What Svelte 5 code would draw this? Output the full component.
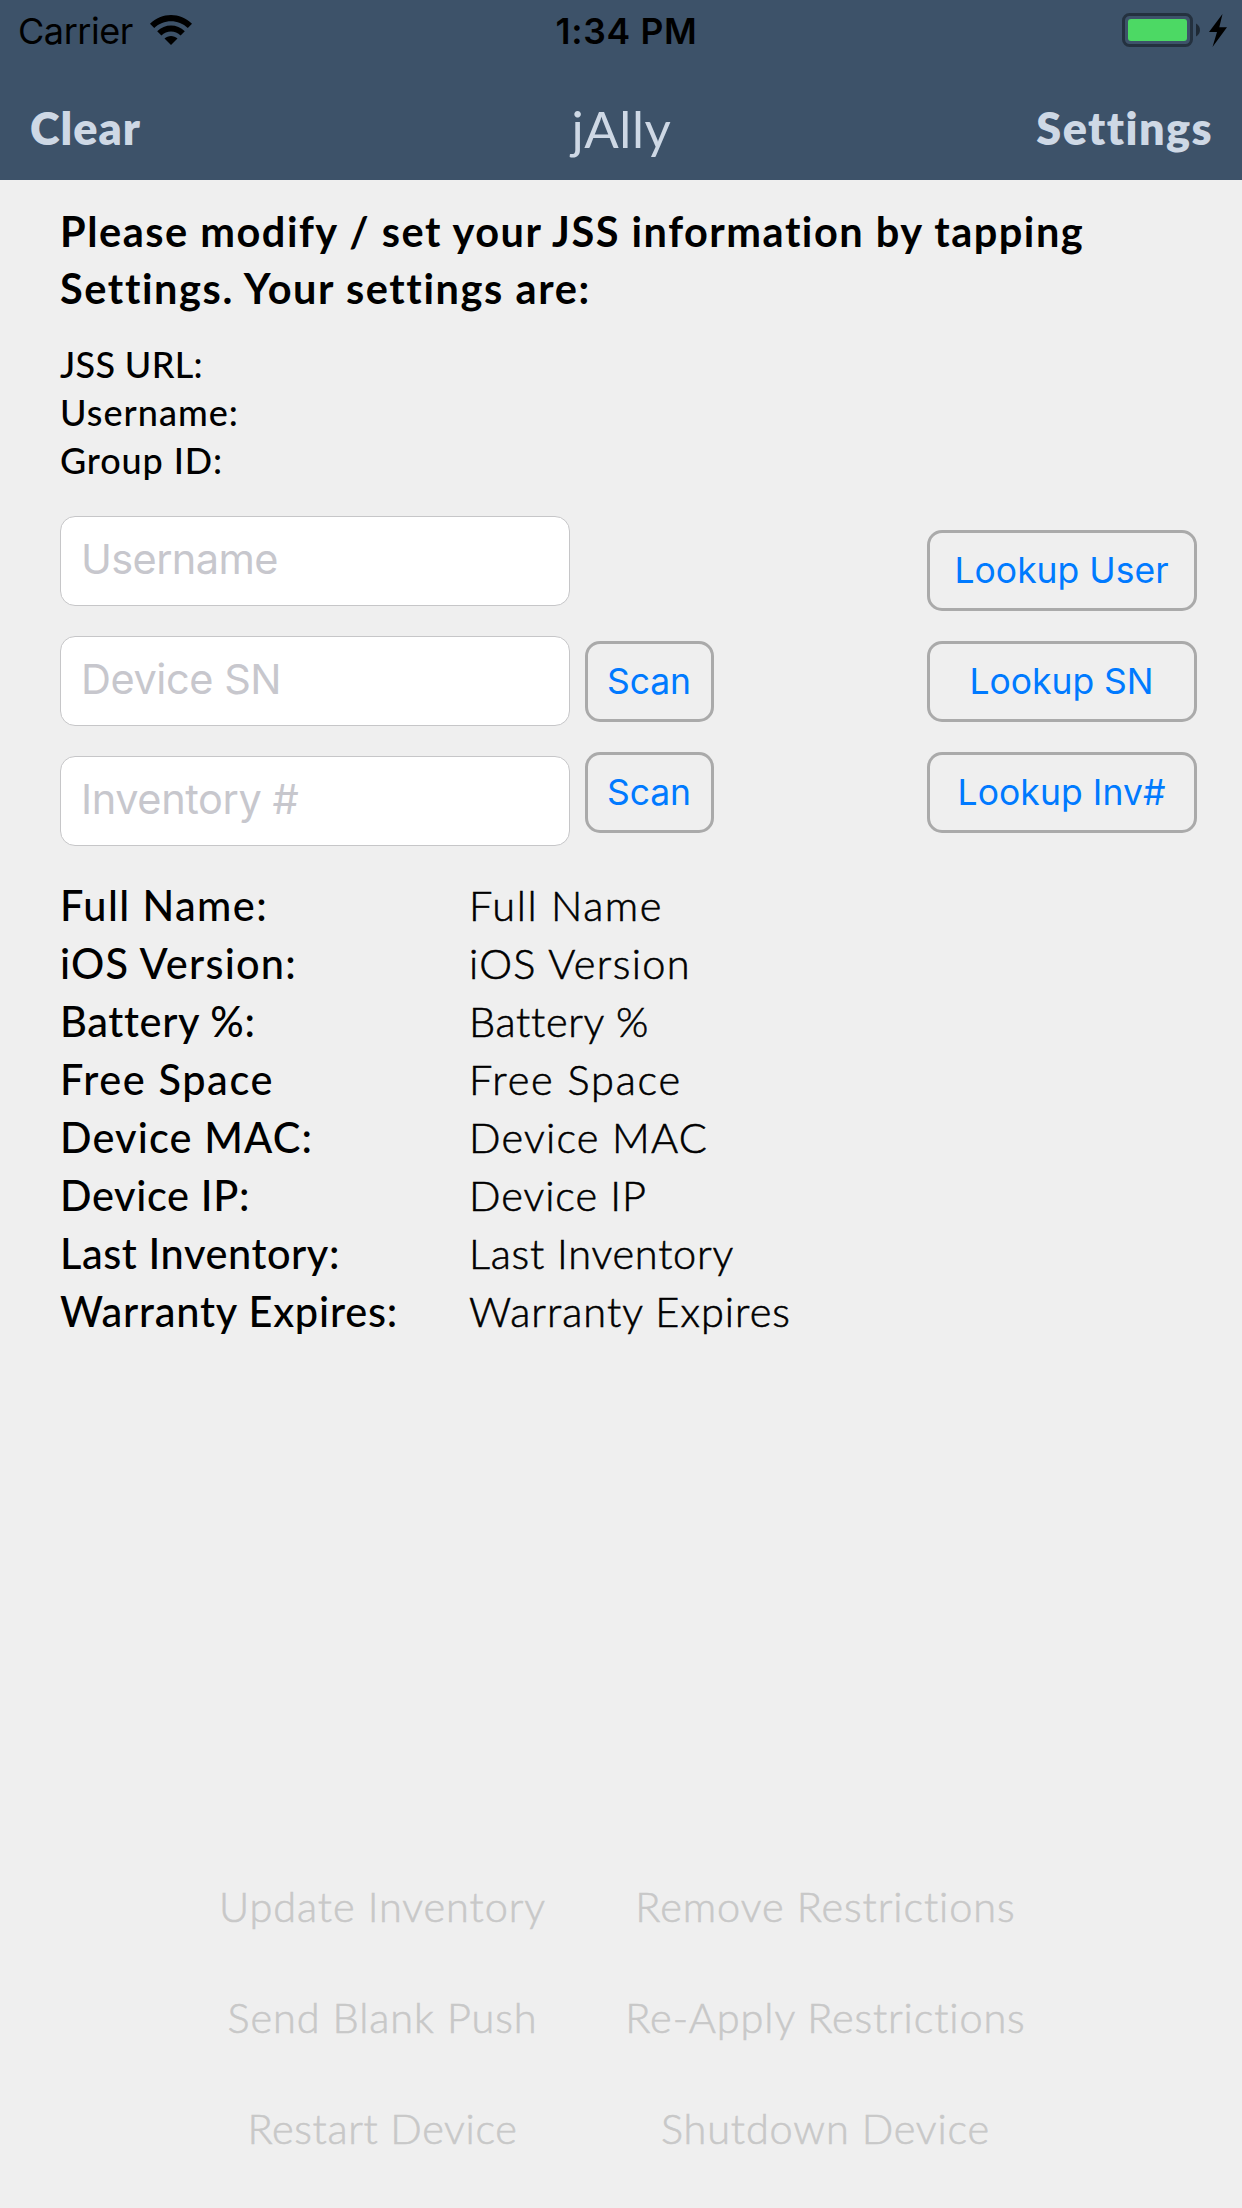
<script>
  const settings = [
    { text: 'JSS URL:', width: 143 },
    { text: 'Username:', width: 179 },
    { text: 'Group ID:', width: 163 }
  ];
  const fields = [
    { text: 'Username', key: 'user' },
    { text: 'Device SN', key: 'serial' },
    { text: 'Inventory #', key: 'inventory' }
  ];
  const lookups = [
    { text: 'Lookup User', width: 214 },
    { text: 'Lookup SN', width: 184 },
    { text: 'Lookup Inv#', width: 208 }
  ];
  const details = [
    { label: 'Full Name:', labelWidth: 208, value: 'Full Name', valueWidth: 194 },
    { label: 'iOS Version:', labelWidth: 237, value: 'iOS Version', valueWidth: 222 },
    { label: 'Battery %:', labelWidth: 194, value: 'Battery %', valueWidth: 179 },
    { label: 'Free Space', labelWidth: 214, value: 'Free Space', valueWidth: 213 },
    { label: 'Device MAC:', labelWidth: 253, value: 'Device MAC', valueWidth: 239 },
    { label: 'Device IP:', labelWidth: 190, value: 'Device IP', valueWidth: 178 },
    { label: 'Last Inventory:', labelWidth: 280, value: 'Last Inventory', valueWidth: 265 },
    { label: 'Warranty Expires:', labelWidth: 338, value: 'Warranty Expires', valueWidth: 322 }
  ];
  const actions = [
    { text: 'Update Inventory', width: 327 },
    { text: 'Remove Restrictions', width: 381 },
    { text: 'Send Blank Push', width: 310 },
    { text: 'Re-Apply Restrictions', width: 401 },
    { text: 'Restart Device', width: 270 },
    { text: 'Shutdown Device', width: 329 }
  ];

  // Tracks a single line of text out (or in) so that it fills the given width.
  function track(node, width) {
    const natural = node.getBoundingClientRect().width;
    const gaps = node.textContent.length;
    node.style.letterSpacing = `${(width - natural) / gaps}px`;
  }
</script>

<div class="screen">
  <header>
    <div class="status">
      <div class="carrier">
        <span use:track={115}>Carrier</span>
        <svg width="42" height="30" viewBox="0 0 42 30">
          <path d="M0 8.8C11.6-2.9 30.4-2.9 42 8.8L37.8 13C28.5 3.9 13.5 3.9 4.2 13Z" />
          <path d="M7.2 16.2C14.8 8.6 27.2 8.6 34.8 16.2L30.6 20.4C25.3 15.3 16.7 15.3 11.4 20.4Z" />
          <path d="M14.5 23.6C18 20.1 24 20.1 27.5 23.6L21 30Z" />
        </svg>
      </div>
      <span class="time" use:track={142}>1:34 PM</span>
      <div class="power">
        <svg width="105" height="34" viewBox="0 0 105 34">
          <rect x="1.5" y="1.5" width="68" height="31" rx="6" fill="none" stroke="#000" stroke-opacity=".4" stroke-width="3" />
          <rect x="6" y="6" width="59" height="22" rx="3" fill="#4cd964" />
          <path d="M74 10.5C79.3 13 79.3 21 74 23.5Z" fill-opacity=".5" />
          <path d="M100.5 1L87 19H95L90.5 34L105 14.2H97.3Z" />
        </svg>
      </div>
    </div>
    <nav>
      <span class="link" use:track={111}>Clear</span>
      <h1 use:track={100}>jAlly</h1>
      <span class="link end" use:track={175}>Settings</span>
    </nav>
  </header>

  <main>
    <h2>
      <span use:track={1025}>Please modify / set your JSS information by tapping</span>
      <span use:track={528}>Settings. Your settings are:</span>
    </h2>
    <div class="settings">
      {#each settings as s}
        <span use:track={s.width}>{s.text}</span>
      {/each}
    </div>

    <section class="form">
      <div class="fields">
        {#each fields as f}
          <input class={f.key} placeholder={f.text} aria-label={f.text} />
        {/each}
      </div>
      <div class="scans">
        <button><span use:track={84}>Scan</span></button>
        <button><span use:track={84}>Scan</span></button>
      </div>
      <div class="lookups">
        {#each lookups as l}
          <button><span use:track={l.width}>{l.text}</span></button>
        {/each}
      </div>
    </section>

    <section class="details">
      {#each details as d}
        <div class="label"><span use:track={d.labelWidth}>{d.label}</span></div>
        <div class="value"><span use:track={d.valueWidth}>{d.value}</span></div>
      {/each}
    </section>

    <section class="actions">
      {#each actions as a}
        <div><span use:track={a.width}>{a.text}</span></div>
      {/each}
    </section>
  </main>
</div>

<style>
  :global(body) {
    margin: 0;
    background: #efefef;
  }
  .screen {
    display: flex;
    flex-direction: column;
    width: 1242px;
    height: 2208px;
    background: #efefef;
    color: #000;
    font-family: Lato, 'Liberation Sans', sans-serif;
    white-space: nowrap;
    font-kerning: normal;
  }
  span {
    display: inline-block;
  }
  header {
    height: 180px;
    background: #3d5269;
  }
  .status {
    display: grid;
    grid-template-columns: 1fr auto 1fr;
    height: 62px;
    line-height: 62px;
    padding: 0 15px 0 18px;
    font-family: Inter, sans-serif;
    font-size: 36px;
  }
  .carrier {
    display: flex;
    gap: 17px;
  }
  .carrier svg {
    margin-top: 15px;
  }
  .time {
    font-weight: 600;
    font-size: 35.5px;
    line-height: 64px;
    margin-left: 8px;
  }
  .power {
    display: flex;
    justify-content: flex-end;
  }
  .power svg {
    margin-top: 13px;
  }
  nav {
    display: grid;
    grid-template-columns: 1fr auto 1fr;
    align-items: center;
    height: 118px;
    box-sizing: border-box;
    padding: 14px 29px 0 30px;
    color: #ced8e5;
  }
  .link {
    justify-self: start;
    font-size: 45px;
    font-weight: 800;
  }
  .end {
    justify-self: end;
  }
  h1 {
    margin: 0;
    font-size: 51px;
    font-weight: 400;
  }
  main {
    flex: 1;
    display: flex;
    flex-direction: column;
    padding: 23px 45px 24px 60px;
  }
  h2 {
    display: flex;
    flex-direction: column;
    align-items: flex-start;
    margin: 0;
    font-size: 41.5px;
    font-weight: 700;
    line-height: 57px;
  }
  .settings {
    display: flex;
    flex-direction: column;
    align-items: flex-start;
    margin-top: 23px;
    font-size: 36px;
    font-weight: 500;
    line-height: 48px;
  }
  .form {
    display: flex;
    gap: 15px;
    margin-top: 32px;
  }
  .fields {
    display: grid;
    gap: 30px;
  }
  input {
    box-sizing: border-box;
    width: 510px;
    height: 90px;
    padding: 0 20px 4px 20px;
    border: 1px solid #c6c6c8;
    border-radius: 15px;
    background: #fff;
    font: 400 41.5px Inter, sans-serif;
    outline: none;
  }
  input::placeholder {
    color: #c7c7cd;
    opacity: 1;
  }
  .user {
    letter-spacing: -0.6px;
  }
  .serial {
    letter-spacing: -0.45px;
  }
  .inventory {
    letter-spacing: -0.4px;
  }
  .scans,
  .lookups {
    display: flex;
    flex-direction: column;
    gap: 30px;
  }
  .scans {
    padding-top: 125px;
  }
  .lookups {
    margin-left: auto;
    padding-top: 14px;
  }
  button {
    display: flex;
    align-items: center;
    justify-content: center;
    box-sizing: border-box;
    height: 81px;
    padding: 0 1px 0 0;
    border: 3px solid #aaaaaa;
    border-radius: 15px;
    background: none;
    color: #007aff;
    font: 400 35.5px Inter, sans-serif;
  }
  .scans button {
    width: 129px;
  }
  .lookups button {
    width: 270px;
  }
  .details {
    display: grid;
    grid-template-columns: 409px 1fr;
    margin-top: 30px;
    font-size: 41.5px;
    line-height: 58px;
  }
  .label {
    font-weight: 500;
  }
  .value {
    font-weight: 300;
    -webkit-text-stroke: 0.6px currentColor;
  }
  .actions {
    display: grid;
    grid-template-columns: 443px 443px;
    margin: auto 0 0 101px;
    font-size: 41.5px;
    font-weight: 300;
    -webkit-text-stroke: 0.6px currentColor;
    line-height: 111px;
    text-align: center;
    color: #c8c8c8;
  }
</style>
